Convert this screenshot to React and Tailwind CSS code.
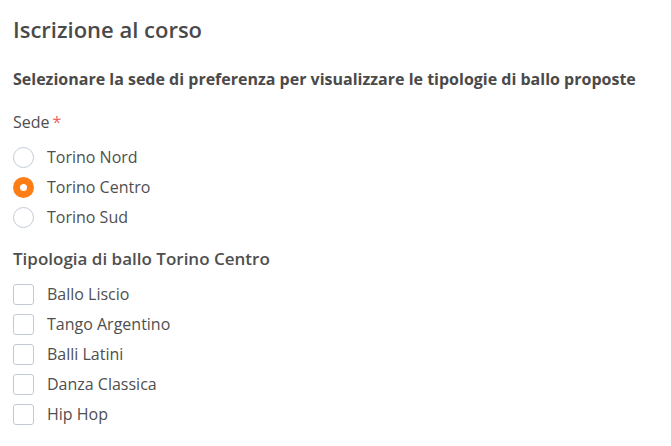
export default function App() {
  const sedi = ['Torino Nord', 'Torino Centro', 'Torino Sud']
  const balli = ['Ballo Liscio', 'Tango Argentino', 'Balli Latini', 'Danza Classica', 'Hip Hop']
  const selected = 'Torino Centro'

  return (
    <div className="min-h-screen bg-white px-[13px] pt-[14px] text-[#4f4f4f] font-['Open_Sans',sans-serif]">
      <h1 className="text-[22px] font-semibold leading-[30px] text-[#4a4a4a]">Iscrizione al corso</h1>

      <p className="mt-[25px] text-[16px] font-bold leading-[20px] text-[#4a4a4a]">
        Selezionare la sede di preferenza per visualizzare le tipologie di ballo proposte
      </p>

      <div className="mt-[23px] text-[16px] leading-[20px]">
        Sede<span className="ml-[3px] text-[#f06060]">*</span>
      </div>

      <div className="mt-[10px] flex flex-col">
        {sedi.map((s) => (
          <label key={s} className="flex h-[30px] items-center gap-[13px] text-[16px]">
            {s === selected ? (
              <span className="flex h-[21px] w-[21px] items-center justify-center rounded-full bg-[#fd7e14]">
                <span className="h-[7px] w-[7px] rounded-full bg-white" />
              </span>
            ) : (
              <span className="h-[21px] w-[21px] rounded-full border border-[#c3cad6] bg-white" />
            )}
            {s}
          </label>
        ))}
      </div>

      <div className="mt-[17px] text-[17px] font-semibold leading-[20px]">Tipologia di ballo Torino Centro</div>

      <div className="mt-[10px] flex flex-col">
        {balli.map((b) => (
          <label key={b} className="flex h-[30px] items-center gap-[13px] text-[16px]">
            <span className="h-[21px] w-[21px] rounded-[3px] border border-[#c3cad6] bg-white" />
            {b}
          </label>
        ))}
      </div>
    </div>
  )
}
